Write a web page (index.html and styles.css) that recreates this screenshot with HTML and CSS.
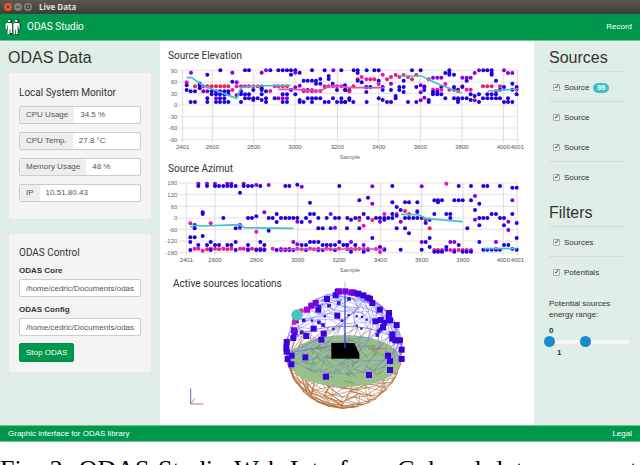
FILE: index.html
```
<!DOCTYPE html>
<html lang="en">
<head>
    <meta charset="UTF-8">
    <meta name="viewport" content="width=device-width, initial-scale=1.0">
    <title>Live Data</title>
    <link rel="stylesheet" href="styles.css">
</head>
<body>
    <div class="titlebar">
        <button class="dot dot-close" aria-label="Close"><svg viewBox="0 0 8 8"><path d="M2.5 2.5l3 3M5.5 2.5l-3 3"/></svg></button>
        <button class="dot" aria-label="Minimize"><svg viewBox="0 0 8 8"><path d="M2 4h4"/></svg></button>
        <button class="dot" aria-label="Maximize"><svg viewBox="0 0 8 8"><path d="M2.5 2.5h3v3h-3z"/></svg></button>
        <span class="window-title">Live Data</span>
    </div>

    <nav class="navbar">
        <a class="brand" href="#">
            <svg class="logo" viewBox="0 0 48 54">
                <g fill="#10261a">
                    <circle cx="15" cy="10" r="6"/>
                    <circle cx="36" cy="10" r="6"/>
                    <path d="M4 20h18v30H11V36H4zM27 18h19v17h-6v16H28z"/>
                </g>
                <g fill="#fff">
                    <circle cx="13" cy="9" r="4"/>
                    <circle cx="34" cy="9" r="4"/>
                    <path d="M2 19q1-4 5-4h10q4 0 4 5v25h-5V34h-2v15H8V23H6v11H2z"/>
                    <path d="M25 20q0-5 5-5h9q5 0 5 5v14h-4V23h-2v26h-5V35h-2v14h-5z"/>
                </g>
            </svg>
            ODAS Studio
        </a>
        <a href="#">Record</a>
    </nav>

    <div class="layout">
        <aside class="sidebar">
            <h1>ODAS Data</h1>
            <section class="well">
                <h2>Local System Monitor</h2>
                <div class="input-group">
                    <label for="cpu">CPU Usage</label>
                    <input id="cpu" type="text" value="34.5 %" readonly>
                </div>
                <div class="input-group">
                    <label for="temp">CPU Temp.</label>
                    <input id="temp" type="text" value="27.8 °C" readonly>
                </div>
                <div class="input-group">
                    <label for="mem">Memory Usage</label>
                    <input id="mem" type="text" value="48 %" readonly>
                </div>
                <div class="input-group">
                    <label for="ip">IP</label>
                    <input id="ip" type="text" value="10.51.80.43" readonly>
                </div>
            </section>
            <section class="well control">
                <h2>ODAS Control</h2>
                <label for="core">ODAS Core</label>
                <input id="core" type="text" value="/home/cedric/Documents/odas/bin/odas">
                <label for="config">ODAS Config</label>
                <input id="config" type="text" value="/home/cedric/Documents/odas/config/odas.cfg">
                <button class="btn">Stop ODAS</button>
            </section>
        </aside>

        <main class="content">
            <h2>Source Elevation</h2>
            <svg id="elevation" class="chart" viewBox="0 69 1122 297"></svg>
            <h2>Source Azimut</h2>
            <svg id="azimut" class="chart" viewBox="0 50 1122 304"></svg>
            <div class="scene">
                <h2>Active sources locations</h2>
                <svg id="sphere" class="chart" viewBox="0 18 1122 408"></svg>
            </div>
        </main>

        <aside class="sidebar right">
            <h1>Sources</h1>
            <ul class="checks">
                <li><label><input type="checkbox" checked> Source <span class="badge">99</span></label></li>
                <li><label><input type="checkbox" checked> Source</label></li>
                <li class="plain"><label><input type="checkbox" checked> Source</label></li>
                <li><label><input type="checkbox" checked> Source</label></li>
            </ul>
            <h1>Filters</h1>
            <ul class="checks">
                <li><label><input type="checkbox" checked> Sources</label></li>
                <li><label><input type="checkbox" checked> Potentials</label></li>
            </ul>
            <p class="range-title">Potential sources energy range:</p>
            <div class="range">
                <label for="low">0</label>
                <div class="slider">
                    <input id="low" type="range" min="0" max="100" value="0">
                    <input id="high" type="range" min="0" max="100" value="45">
                </div>
                <label class="high" for="high">1</label>
            </div>
        </aside>
    </div>

    <footer class="footer">
        <span>Graphic interface for ODAS library</span>
        <a href="#">Legal</a>
    </footer>
    <p class="caption">Fig. 2: ODAS Studio Web Interface. Colored dots represent</p>

    <script src="script.js"></script>
</body>
</html>
```
FILE: styles.css
```
:root {
    --green: #00984c;
    --pale: #dfeee6;
    --text: #333;
}

* {
    box-sizing: border-box;
    margin: 0;
    padding: 0;
}

body {
    height: 100vh;
    overflow: hidden;
    background: #fff;
    color: var(--text);
    font: 8px/12px "Liberation Sans", Arial, sans-serif;
}

input, button {
    font: inherit;
    color: inherit;
}

h1 {
    font-size: 16px;
    font-weight: normal;
    line-height: 20px;
}

h2 {
    font: 10px/14px Roboto, sans-serif;
}

a {
    color: #fff;
    text-decoration: none;
}

/* window frame */
.titlebar {
    display: flex;
    align-items: center;
    gap: 2px;
    height: 14px;
    padding: 0 4px;
    background: linear-gradient(#59574f, #3e3d38);
    color: #e4e0d8;
}

.dot {
    width: 8px;
    height: 8px;
    border: none;
    border-radius: 50%;
    background: #85827a;
}

.dot-close {
    background: #ec5a34;
}

.dot svg {
    display: block;
    fill: none;
    stroke: #3c3b37;
}

.window-title {
    margin-left: 5px;
    font-family: "Open Sans", sans-serif;
    font-weight: bold;
}

.navbar {
    display: flex;
    align-items: center;
    justify-content: space-between;
    height: 27px;
    padding: 0 8px 0 5px;
    background: var(--green);
    border-bottom: 1px solid #6fc298;
    color: #fff;
}

.brand {
    display: flex;
    align-items: center;
    gap: 6px;
    font: 10px/14px Roboto, sans-serif;
}

.logo {
    width: 16px;
    height: 18px;
}

.layout {
    display: grid;
    grid-template-columns: 160px 1fr 106px;
}

.sidebar {
    padding: 7px 8px 8px;
    background: var(--pale);
}

.well {
    margin-top: 4px;
    padding: 13px 10px 17px;
    background: #f4f4f4;
    border: 1px solid #e6ebe8;
    border-radius: 2px;
}

.well h2 {
    margin-bottom: 6px;
}

.input-group {
    display: flex;
    height: 18px;
    margin-bottom: 8px;
    border: 1px solid #ccc;
    border-radius: 2px;
    background: #fff;
    color: #555;
}

.input-group:last-child {
    margin-bottom: 0;
}

.input-group label {
    padding: 0 6px;
    line-height: 16px;
    background: #eee;
    white-space: nowrap;
}

.input-group input {
    flex: 1;
    min-width: 0;
    padding: 0 6px;
    border: none;
    background: none;
}

.control {
    margin-top: 13px;
    padding: 12px 10px 10px;
}

.control h2 {
    margin-bottom: 5px;
}

.control label {
    display: block;
    margin-bottom: 2px;
    font-weight: bold;
}

.control input {
    display: block;
    width: 100%;
    height: 18px;
    margin-bottom: 7px;
    padding: 0 6px;
    border: 1px solid #ccc;
    border-radius: 2px;
    background: #fff;
    color: #555;
}

.btn {
    height: 19px;
    padding: 0 6px;
    border: 1px solid #008a44;
    border-radius: 2px;
    background: var(--green);
    color: #fff;
}

/* charts */
.content {
    padding: 8px 0 12px;
}

.content h2 {
    padding-left: 8px;
}

.chart {
    display: block;
    width: 100%;
    font: 18px "Liberation Sans", sans-serif;
}

.scene {
    display: grid;
}

.scene > * {
    grid-area: 1 / 1;
}

.scene h2 {
    padding-left: 13px;
}

/* right column */
.right {
    padding-left: 15px;
    padding-right: 6px;
}

.checks {
    margin: 3px 10px 12px 0;
    list-style: none;
}

.checks li {
    height: 30px;
    padding-left: 4px;
    border-top: 1px solid #d3dcd7;
}

.checks .plain {
    border-color: transparent;
}

.checks label {
    display: flex;
    align-items: center;
    gap: 4px;
    height: 31px;
}

.checks input {
    width: 7px;
    height: 7px;
    border: 1px solid #aaa;
    border-radius: 1px;
    background: #f4f4f4;
    appearance: none;
}

.checks input:checked::before {
    content: "✓";
    display: block;
    color: #222;
    font: bold 7px/5px "DejaVu Sans", sans-serif;
}

.badge {
    padding: 0 4px;
    border-radius: 5px;
    background: #43bfc3;
    color: #fff;
    font-size: 7px;
    font-weight: bold;
    line-height: 10px;
}

.range-title {
    max-width: 70px;
    line-height: 11px;
}

.range {
    margin-top: 5px;
    font-weight: bold;
}

.range label {
    display: block;
    line-height: 11px;
}

.range .high {
    padding-left: 8px;
}

.slider {
    display: grid;
    align-items: center;
    height: 11px;
    margin: 0 0 0 -5px;
    background: linear-gradient(#f6f6f6, #f6f6f6) center / calc(100% - 10px) 4px no-repeat;
}

.slider input {
    grid-area: 1 / 1;
    width: 100%;
    height: 11px;
    background: none;
    appearance: none;
    pointer-events: none;
}

.slider input::-webkit-slider-thumb {
    width: 11px;
    height: 11px;
    border-radius: 50%;
    background: #168bd0;
    appearance: none;
    pointer-events: auto;
}

.footer {
    display: flex;
    align-items: center;
    justify-content: space-between;
    height: 17px;
    padding: 0 8px;
    background: var(--green);
    border-top: 1px solid #6fc298;
    border-bottom: 1px solid #6fc298;
    color: #fff;
}

.caption {
    margin-top: 13px;
    padding-right: 3px;
    color: #000;
    font: 26px/30px "Liberation Serif", serif;
    text-align-last: justify;
}
```
FILE: script.js
```
const NS = 'http://www.w3.org/2000/svg';
const BLUE = '#1c00e6', PURPLE = '#8400dc', PINK = '#f010b4', RED = '#f0205c';
const TEAL = '#45c0c4', ROSE = '#d84fc0';

function add(parent, tag, attrs, text) {
    const el = document.createElementNS(NS, tag);
    for (const key in attrs) el.setAttribute(key, attrs[key]);
    if (text !== undefined) el.textContent = text;
    parent.appendChild(el);
    return el;
}

function drawAxes(svg, cfg) {
    cfg.rows.forEach(([label, y]) => {
        add(svg, 'line', { x1: 56, x2: 1072, y1: y, y2: y, stroke: '#e4e4e4', 'stroke-width': 3 });
        add(svg, 'text', { x: 52, y: y + 7, 'text-anchor': 'end', fill: '#666' }, label);
    });
    cfg.cols.forEach(([label, x]) => {
        add(svg, 'line', { x1: x, x2: x, y1: cfg.rows[0][1], y2: cfg.bottom + 9, stroke: '#dcdcdc', 'stroke-width': 3 });
        add(svg, 'text', { x: x, y: cfg.bottom + 29, 'text-anchor': 'middle', fill: '#555' }, label);
    });
    add(svg, 'text', { x: 570, y: cfg.bottom + 58, 'text-anchor': 'middle', fill: '#666' }, 'Sample');
}

// rows: [colour, y, [x, ...]]
function drawDots(svg, shift, rows) {
    rows.forEach(([color, y, xs]) => xs.forEach(x =>
        add(svg, 'ellipse', { cx: x + shift, cy: y, rx: 6, ry: 6, fill: color })));
}

function drawLine(svg, color, points) {
    add(svg, 'polyline', { points, fill: 'none', stroke: color, 'stroke-width': 5 });
}

const elevation = document.getElementById('elevation');
drawAxes(elevation, {
    rows: [['90', 91], ['60', 126], ['30', 160], ['0', 195], ['-30', 229], ['-60', 264], ['-90', 299]],
    cols: [['2401', 68], ['2600', 157], ['2800', 281], ['3000', 405], ['3200', 532], ['3400', 656], ['3600', 781], ['3800', 906], ['4000', 1030], ['4001', 1072]],
    bottom: 299
});
drawDots(elevation, 0, [
    [BLUE, 91, [181, 255, 267, 331, 355, 368, 381, 393, 406, 456, 494, 544]],
    [PURPLE, 91, [318, 520]],
    [PURPLE, 98, [93, 217, 305, 406]],
    [BLUE, 104, [142, 393]], [BLUE, 98, [419]],
    [BLUE, 108, [506]], [BLUE, 117, [506, 481]],
    [BLUE, 122, [431, 443, 456, 468]], [BLUE, 131, [468, 481, 518, 119]],
    [BLUE, 125, [217]], [PURPLE, 127, [230]], [PINK, 127, [80]],
    [BLUE, 136, [80, 119]], [PURPLE, 137, [419]],
    [RED, 139, [105, 155, 168, 181, 193, 205, 267, 293, 368, 381, 494]],
    [PINK, 139, [130, 142, 230, 243, 255, 280, 305, 344, 355, 506, 519, 531, 544]],
    [BLUE, 145, [119, 305]], [PURPLE, 142, [406]],
    [BLUE, 150, [80, 280, 305, 393, 443, 531, 556]], [PINK, 150, [217, 431, 456]],
    [BLUE, 154, [92, 105, 155, 168, 180, 193, 205, 243, 318]],
    [PURPLE, 154, [130, 142]], [PINK, 153, [331, 443, 468, 481]], [RED, 154, [431, 456, 568]],
    [BLUE, 163, [155, 168, 180, 193, 205, 243, 255, 267, 305, 368, 381, 406]], [PURPLE, 166, [230]],
    [BLUE, 175, [142, 180, 193, 255, 267, 280, 293, 318, 344, 443, 456, 468, 481, 519, 544]],
    [PURPLE, 175, [168, 355, 368, 381]], [BLUE, 180, [280, 305, 419]],
    [BLUE, 186, [92, 105, 142, 168, 180, 193, 205, 243, 318, 368, 381, 419, 431, 456, 494, 506, 531, 544, 556]]
]);
drawDots(elevation, 555, [
    [BLUE, 91, [26, 38, 65, 88, 101, 201, 227, 313, 415, 427, 440]], [PURPLE, 91, [402, 477]],
    [BLUE, 99, [38, 301, 313, 440]], [PURPLE, 99, [489, 502, 389]], [BLUE, 104, [313, 327, 440]],
    [PINK, 104, [113]], [RED, 105, [176, 214, 152]], [PINK, 111, [50, 138, 163, 189]],
    [PURPLE, 113, [264, 277, 289, 352, 365, 377]],
    [RED, 118, [38, 88, 126, 201, 251]], [PINK, 118, [64, 76]], [BLUE, 122, [38, 101, 176, 365, 453]],
    [BLUE, 127, [50]], [PURPLE, 131, [138]], [PINK, 132, [101, 301]], [BLUE, 131, [502]],
    [BLUE, 136, [0]], [PURPLE, 136, [227]], [RED, 139, [25, 352, 414, 427]], [PINK, 139, [440, 465, 238]],
    [BLUE, 141, [64, 76, 113, 163, 176, 214, 238, 289, 327, 352, 477, 515]],
    [BLUE, 150, [0, 13, 113, 138, 163, 238]], [PINK, 149, [264, 277, 289, 313, 365, 377, 515]],
    [BLUE, 149, [327, 339, 465, 502]], [RED, 154, [13, 339, 453]], [BLUE, 156, [64, 176, 264, 277]], [PURPLE, 157, [227]],
    [BLUE, 163, [264, 277, 289, 377, 402, 427, 440, 453, 515]], [BLUE, 168, [152, 389]],
    [BLUE, 175, [13, 101, 152, 301, 327, 339, 352, 365, 414, 427, 440, 453, 465, 489]], [PURPLE, 173, [238]],
    [BLUE, 180, [13, 113, 251, 339, 377]], [PURPLE, 181, [227, 389]],
    [BLUE, 186, [0, 25, 65, 126, 138, 189, 214, 251, 339, 402, 477, 489, 502]]
]);
drawLine(elevation, TEAL, '80,113 95,113 130,137 230,175 243,143 280,138 392,136');
drawLine(elevation, ROSE, '355,148 400,148 480,153 505,140 535,138 565,143 673,143');
drawLine(elevation, TEAL, '718,108 785,108 825,128 905,159');
drawLine(elevation, TEAL, '983,153 1045,149 1070,147');

const azimut = document.getElementById('azimut');
drawAxes(azimut, {
    rows: [['180', 71], ['120', 106], ['60', 141], ['0', 176], ['-60', 210], ['-120', 245], ['-180', 280]],
    cols: [['2401', 79], ['2600', 165], ['2800', 289], ['3000', 413], ['3200', 537], ['3400', 661], ['3600', 785], ['3800', 909], ['4000', 1030], ['4001', 1072]],
    bottom: 280
});
drawDots(azimut, 0, [
    [PURPLE, 73, [115, 141, 165, 202, 214, 251]],
    [BLUE, 80, [115, 141, 165, 177, 190, 202, 214, 227, 251, 264, 276, 301, 376, 388, 538]],
    [PURPLE, 77, [289, 326]], [BLUE, 76, [412]], [PURPLE, 82, [425]],
    [BLUE, 100, [240]], [BLUE, 130, [450]], [BLUE, 159, [128]], [PURPLE, 159, [313]],
    [BLUE, 164, [128, 350, 450, 462]], [PURPLE, 164, [512]], [BLUE, 171, [289]],
    [BLUE, 176, [190, 264, 276, 326, 338, 363, 376, 388, 400, 412, 438, 475, 500, 525, 537, 562]],
    [BLUE, 188, [350, 425]], [PURPLE, 187, [412, 450]], [PINK, 192, [91, 152]], [BLUE, 197, [104, 240]],
    [BLUE, 207, [104, 227, 475, 488, 512]], [PURPLE, 205, [240, 525]], [BLUE, 214, [326]], [PINK, 217, [289]],
    [BLUE, 234, [91, 104]], [BLUE, 230, [128]],
    [BLUE, 248, [91, 152, 227, 301, 450, 462, 475, 538]], [PURPLE, 248, [400]],
    [BLUE, 257, [115, 141, 165, 177, 202, 214, 264, 313, 425, 438, 488, 500, 512, 525, 550, 562]], [PURPLE, 255, [412]],
    [PINK, 268, [104, 115, 152, 165, 190, 214, 240, 251, 276, 301, 338, 363, 388, 412, 450, 475, 500, 537]],
    [RED, 270, [141, 177, 202, 264, 289, 313, 376, 425, 462, 512, 562]],
    [BLUE, 272, [91, 152, 227, 264, 289, 301, 313, 350, 363, 376, 388, 400, 438, 475, 488, 525]], [PINK, 274, [128]]
]);
drawDots(azimut, 555, [
    [PINK, 73, [304]], [BLUE, 80, [142, 341, 378, 415, 427, 465]], [PURPLE, 81, [82, 230]], [BLUE, 85, [502, 515]],
    [PURPLE, 110, [390]], [BLUE, 115, [69]], [BLUE, 123, [43, 268, 279, 291, 328, 341, 353, 378]], [PURPLE, 123, [502]],
    [BLUE, 129, [142, 180, 192, 217, 279]], [BLUE, 133, [403]], [PURPLE, 133, [82]],
    [BLUE, 143, [155]], [BLUE, 152, [167, 390]], [RED, 155, [180, 217]], [BLUE, 158, [217]],
    [BLUE, 164, [56, 142, 268, 304, 316, 440, 453, 502]], [PINK, 164, [118, 155, 192]], [BLUE, 169, [155]],
    [BLUE, 176, [31, 43, 69, 93, 105, 118, 130, 142, 180, 192, 205, 217, 230, 316, 403, 415, 427, 465, 477]],
    [BLUE, 181, [18, 118, 254]], [RED, 182, [43, 82, 242]], [PURPLE, 181, [390]], [PURPLE, 187, [105, 167, 490]],
    [BLUE, 191, [242, 515]], [PINK, 199, [56]], [BLUE, 198, [403, 477]],
    [BLUE, 207, [6, 43, 155, 180, 367]], [RED, 207, [254]], [PURPLE, 212, [490]], [BLUE, 222, [192]], [BLUE, 236, [82, 254, 515]],
    [PURPLE, 248, [18, 230, 316, 328, 453]], [BLUE, 248, [242, 403]],
    [BLUE, 257, [6, 31, 341, 477, 490]], [PURPLE, 257, [56]], [BLUE, 263, [254, 304, 105]],
    [PINK, 269, [6, 31, 43, 69, 93, 118]], [RED, 269, [18, 56, 453]],
    [BLUE, 271, [69, 118, 167, 230, 304, 415, 427, 440, 453, 465, 515]], [PURPLE, 269, [502]],
    [PINK, 272, [268, 291, 316, 328, 353, 378]], [RED, 272, [279, 341, 365]],
    [BLUE, 277, [18, 56, 268, 279, 291, 328, 353, 365, 378]], [PINK, 278, [105]]
]);
drawLine(azimut, TEAL, '91,204 104,198 130,200 240,196 252,205 400,207');
drawLine(azimut, ROSE, '355,271 555,269 673,269');
drawLine(azimut, TEAL, '723,165 775,166 800,178 908,187');
drawLine(azimut, TEAL, '970,268 1070,268');

// 3d view: wire sphere, ground disc, microphone array and sources
const sphere = document.getElementById('sphere');
const CX = 552, CY = 237, R = 175, TILT = 0.42;

let seed = 7;
function random() {
    seed = (seed * 16807) % 2147483647;
    return seed / 2147483647;
}

function project(lat, lon) {
    const x = Math.cos(lat) * Math.cos(lon);
    const z = Math.cos(lat) * Math.sin(lon);
    return [
        (CX + R * x).toFixed(1),
        (CY - R * (Math.sin(lat) * Math.cos(TILT) - z * Math.sin(TILT))).toFixed(1)
    ];
}

// each ring has fewer points than the one below it, down to a few at the pole
function mesh(sign, color, opacity) {
    const rings = 7, points = [];
    for (let i = 0; i <= rings; i++) {
        const angle = i / (rings + 0.5) * Math.PI / 2;
        const steps = Math.max(4, Math.round(26 * Math.cos(angle)));
        points.push([]);
        for (let j = 0; j < steps; j++) {
            const lat = sign * (angle + (i ? random() - 0.5 : 0) * 0.2);
            const lon = (j + random() * 0.6) / steps * Math.PI * 2;
            points[i].push(project(lat, lon));
        }
    }
    let d = '';
    for (let i = 0; i < rings; i++) {
        const n = points[i].length, m = points[i + 1].length;
        for (let j = 0; j < n; j++) {
            const a = points[i][j], b = points[i][(j + 1) % n];
            const c = points[i + 1][Math.floor(j * m / n)];
            d += `M${a}L${b}L${c}L${a}`;
        }
    }
    add(sphere, 'path', { d, fill: 'none', stroke: color, 'stroke-width': 2, opacity });
}

mesh(-1, '#b0703c', 0.9);
add(sphere, 'ellipse', { cx: 555, cy: 270, rx: 167, ry: 78, fill: '#98bf8c' });

let veins = '';
for (let i = 0; i < 80; i++) {
    const a = random() * Math.PI * 2, r = Math.sqrt(random()) * 0.85;
    const x = 555 + Math.cos(a) * r * 160, y = 270 + Math.sin(a) * r * 74;
    veins += `M${x.toFixed(1)} ${y.toFixed(1)}l${((random() - 0.5) * 50).toFixed(1)} ${((random() - 0.5) * 36).toFixed(1)}`;
}
add(sphere, 'path', { d: veins, stroke: '#62803f', 'stroke-width': 2, opacity: 0.8 });
mesh(1, '#6c6cf4', 0.6);

add(sphere, 'path', { d: 'M514 216h69l15 32v14h-84z', fill: '#000' });
add(sphere, 'path', { d: 'M514 262h84', stroke: '#063c08', 'stroke-width': 3 });
add(sphere, 'path', { d: 'M555 55V230', stroke: '#2a50dc', 'stroke-width': 4 });
add(sphere, 'path', { d: 'M555 32V60', stroke: '#b4dcf4', 'stroke-width': 4 });
add(sphere, 'path', { d: 'M626 233h52', stroke: '#d07040', 'stroke-width': 3 });

// [colour, size, [x, y, x, y, ...]]
[
    ['#3c00e0', 18, [533, 62, 581, 65, 595, 68, 610, 73, 622, 80, 630, 83, 501, 84, 527, 73, 475, 116, 461, 173, 439, 195,
        637, 96, 659, 116, 687, 126, 686, 138, 690, 148, 669, 169, 673, 155, 662, 147, 646, 151, 710, 162,
        697, 190, 697, 203, 706, 208, 720, 208, 725, 236, 725, 264, 684, 254, 690, 270, 690, 297, 627, 312, 498, 317,
        436, 259, 394, 280, 395, 254, 383, 264, 380, 242, 379, 230, 380, 213, 400, 201, 404, 183, 484, 206, 491, 188, 532, 134]],
    ['#7a00dc', 18, [537, 61, 556, 61, 574, 64, 454, 104, 467, 96, 402, 178, 407, 148]],
    ['#a800d4', 18, [441, 116]],
    ['#e018b4', 13, [424, 119, 402, 155]],
    ['#2c14e6', 11, [567, 84, 536, 96, 507, 104, 478, 107, 431, 148, 425, 184, 477, 154, 489, 162, 652, 192, 656, 182, 661, 176]],
    ['#2c14e6', 7, [566, 132, 590, 136, 606, 138, 620, 146, 590, 164, 604, 173, 546, 149, 520, 174, 494, 136, 456, 149]]
].forEach(([fill, size, xy]) => {
    for (let i = 0; i < xy.length; i += 2) {
        add(sphere, 'rect', { x: xy[i] - size / 2, y: xy[i + 1] - size / 2, width: size, height: size, fill });
    }
});
add(sphere, 'circle', { cx: 411, cy: 132, r: 17, fill: '#4cc4c0' });

// orientation gizmo
add(sphere, 'path', { d: 'M92 399V352', stroke: '#5868e0', 'stroke-width': 3 });
add(sphere, 'path', { d: 'M92 399h38', stroke: '#e06060', 'stroke-width': 3 });
add(sphere, 'path', { d: 'M92 399l12 -16', stroke: '#60b060', 'stroke-width': 3 });
```
